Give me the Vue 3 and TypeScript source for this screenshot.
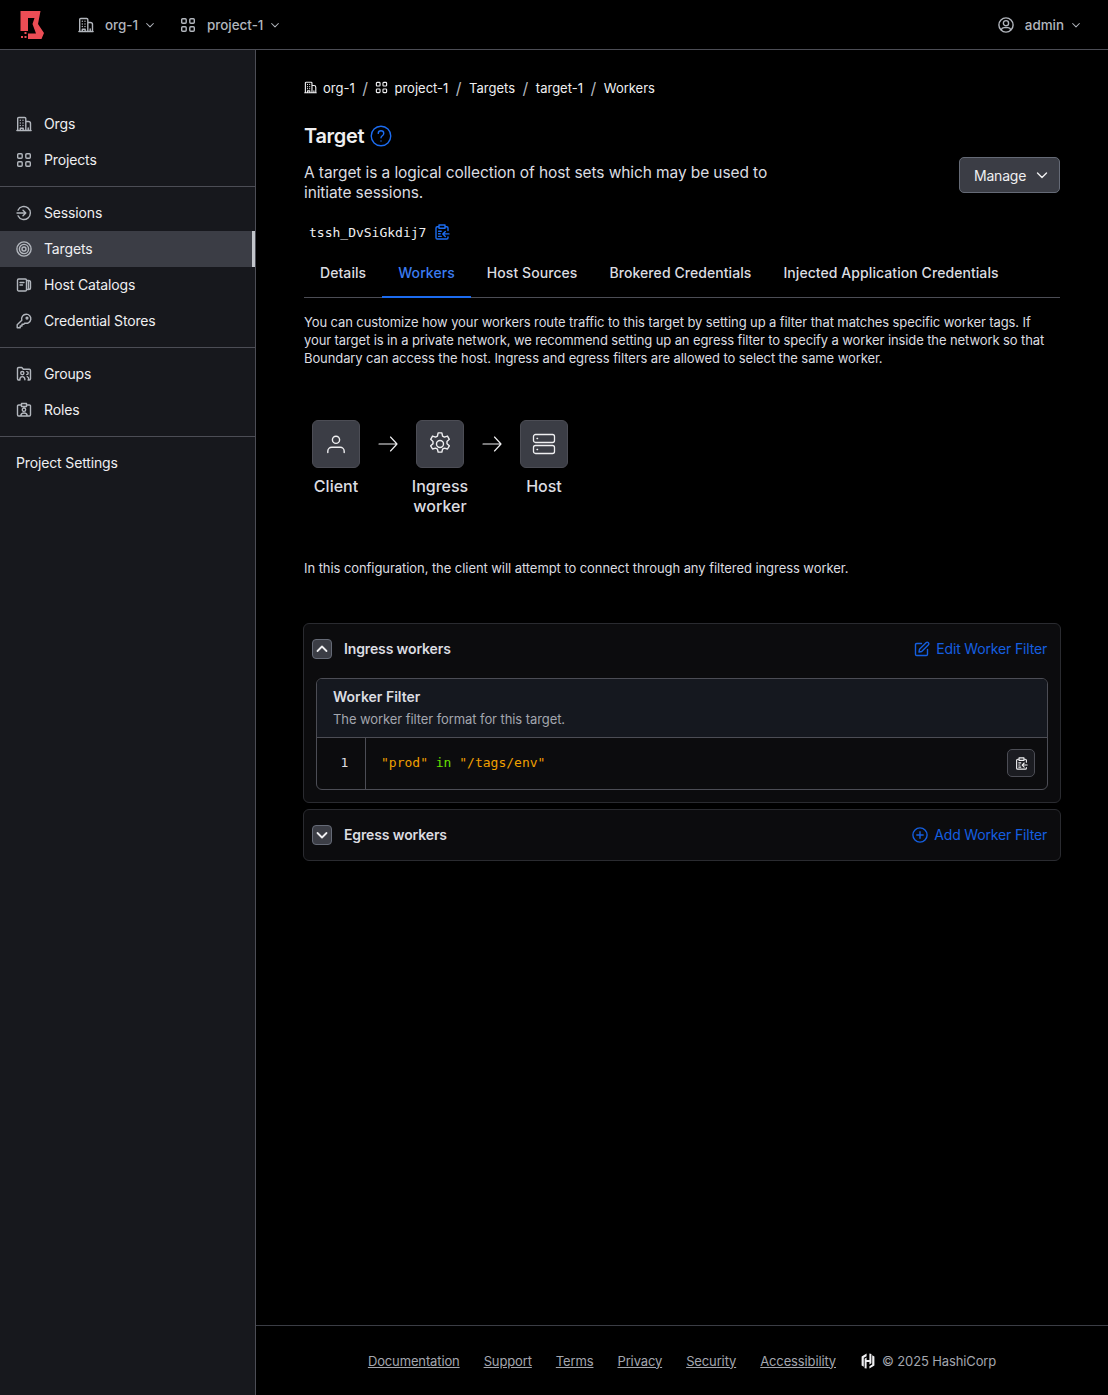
<script setup lang="ts">
const icons: Record<string, string> = {
  org: 'M1.7 14.5V2.6c0-.7.4-1.1 1.1-1.1h5.9c.7 0 1.1.4 1.1 1.1v11.9M.9 14.5h14.2M9.8 5.5h2.6c1.3 0 2.1.8 2.1 2.1v6.9M4.3 4.2v.1M7 4.2v.1M4.3 6.9v.1M7 6.9v.1M4.3 9.4v.1M7 9.4v.1M4.3 14.5v-2.3h2.9v2.3M12.2 14.5v-2.5',
  grid: 'M2.7 1.7h2.5c.6 0 1 .4 1 1v2.5c0 .6-.4 1-1 1H2.7c-.6 0-1-.4-1-1V2.7c0-.6.4-1 1-1zM10.8 1.7h2.5c.6 0 1 .4 1 1v2.5c0 .6-.4 1-1 1h-2.5c-.6 0-1-.4-1-1V2.7c0-.6.4-1 1-1zM2.7 9.8h2.5c.6 0 1 .4 1 1v2.5c0 .6-.4 1-1 1H2.7c-.6 0-1-.4-1-1v-2.5c0-.6.4-1 1-1zM10.8 9.8h2.5c.6 0 1 .4 1 1v2.5c0 .6-.4 1-1 1h-2.5c-.6 0-1-.4-1-1v-2.5c0-.6.4-1 1-1z',
  sessions: 'M2 5.2A6.5 6.5 0 1 1 2 10.8M1 8h8.5M7 5.2 9.8 8 7 10.8',
  targets: 'M8 .9a7.1 7.1 0 1 0 0 14.2A7.1 7.1 0 0 0 8 .9zM8 3.4a4.6 4.6 0 1 0 0 9.2 4.6 4.6 0 0 0 0-9.2zM8 6a2 2 0 1 0 0 4 2 2 0 0 0 0-4z',
  catalogs: 'M1.5 3.2c0-.6.5-1.2 1.2-1.2h6.6c.7 0 1.2.6 1.2 1.2v9.6c0 .6-.5 1.2-1.2 1.2H2.7c-.7 0-1.2-.6-1.2-1.2zM10.5 3.5h2.2c1 0 1.8.8 1.8 1.8v5.4c0 1-.8 1.8-1.8 1.8h-2.2M12.5 3.8v8.4M4 5.5h4M4 8h2.5',
  key: 'M10.2 1.2a4.6 4.6 0 0 0-4.4 6L1.2 11.8v3h3v-1.8H6v-1.8h1.8l1.1-1.1a4.6 4.6 0 1 0 1.3-9zM11 4.2a.9.9 0 1 0 0 1.8.9.9 0 0 0 0-1.8z',
  groups: 'M4 14H2.7c-.7 0-1.2-.5-1.2-1.2V2.7c0-.7.5-1.2 1.2-1.2h3.1l1.5 1.7h6c.7 0 1.2.5 1.2 1.2v8.4c0 .7-.5 1.2-1.2 1.2H12M6.3 5.5a1.6 1.6 0 1 0 0 3.2 1.6 1.6 0 0 0 0-3.2zM3.8 13.8c0-2 1.1-3.2 2.5-3.2s2.6 1.2 2.6 3.2M10.7 5.6a1.5 1.5 0 0 1 0 3M11.2 10.6c1 .3 1.6 1.4 1.6 3',
  roles: 'M5.5 3H2.7c-.7 0-1.2.5-1.2 1.2v8.6c0 .7.5 1.2 1.2 1.2h10.6c.7 0 1.2-.5 1.2-1.2V4.2c0-.7-.5-1.2-1.2-1.2h-2.8M5.5 1.5h5v3h-5zM8 6a1.7 1.7 0 1 0 0 3.4A1.7 1.7 0 0 0 8 6zM4.8 14c0-2 1.3-3 3.2-3s3.2 1 3.2 3',
  chevD: 'M3.5 6 8 10.5 12.5 6',
  chevU: 'M3.5 10 8 5.5 12.5 10',
  user: 'M8 .9a7.1 7.1 0 1 0 0 14.2A7.1 7.1 0 0 0 8 .9zM8 3.6a2.6 2.6 0 1 0 0 5.2 2.6 2.6 0 0 0 0-5.2zM3.2 13c.4-1.6 1.4-2.4 3-2.4h3.6c1.6 0 2.6.8 3 2.4',
  help: 'M8 .9a7.1 7.1 0 1 0 0 14.2A7.1 7.1 0 0 0 8 .9zM6 6.1c0-1.1.9-1.9 2-1.9s2 .8 2 1.9c0 1.7-2 1.7-2 3.2M8 11.6v.1',
  clip: 'M11.5 2.8h1.2c.7 0 1.3.6 1.3 1.3v2.4M4.5 2.8H3.3C2.6 2.8 2 3.4 2 4.1v9.6c0 .7.6 1.3 1.3 1.3h9.4c.7 0 1.3-.6 1.3-1.3v-.7M5 1h6v3.2H5zM4.6 7.2h2.6M4.6 9.8h1.6M4.6 12.4h2.6M15 9.9H8.8M11.3 7.4 8.8 9.9l2.5 2.5',
  edit: 'M7.5 2.5H2.7c-.7 0-1.2.5-1.2 1.2v9.6c0 .7.5 1.2 1.2 1.2h9.6c.7 0 1.2-.5 1.2-1.2V8.5M5.5 8.3 12.3 1.5c.5-.5 1.3-.5 1.8 0l.4.4c.5.5.5 1.3 0 1.8L7.7 10.5l-2.7.5z',
  plus: 'M8 .9a7.1 7.1 0 1 0 0 14.2A7.1 7.1 0 0 0 8 .9zM8 4.8v6.4M4.8 8h6.4',
}

const navGroups = [
  [{ icon: 'org', label: 'Orgs' }, { icon: 'grid', label: 'Projects' }],
  [
    { icon: 'sessions', label: 'Sessions' },
    { icon: 'targets', label: 'Targets', active: true },
    { icon: 'catalogs', label: 'Host Catalogs' },
    { icon: 'key', label: 'Credential Stores' },
  ],
  [{ icon: 'groups', label: 'Groups' }, { icon: 'roles', label: 'Roles' }],
]
const tabs = ['Details', 'Workers', 'Host Sources', 'Brokered Credentials', 'Injected Application Credentials']
const footerLinks = ['Documentation', 'Support', 'Terms', 'Privacy', 'Security', 'Accessibility']
</script>

<template>
  <div class="app">
    <header class="topbar">
      <div class="topbar-left">
        <svg class="logo" width="24" height="28" viewBox="0 0 24 28">
          <path fill="#ec4d55" d="M.5 0H20.5L18 13l6 9-2.5 6H8v-5.5h8L12.5 13l2-6H8v13H.5z" />
          <path fill="#ec4d55" d="M4.5 21h2v2h-2zM1 25h2v2H1zM4.5 25h2v2h-2z" />
        </svg>
        <div class="top-item">
          <svg class="ic16" viewBox="0 0 16 16"><path :d="icons.org" /></svg>
          <span>org-1</span>
          <svg class="ic12" viewBox="0 0 16 16"><path :d="icons.chevD" /></svg>
        </div>
        <div class="top-item">
          <svg class="ic16" viewBox="0 0 16 16"><path :d="icons.grid" /></svg>
          <span>project-1</span>
          <svg class="ic12" viewBox="0 0 16 16"><path :d="icons.chevD" /></svg>
        </div>
      </div>
      <div class="top-item user">
        <svg class="ic16" viewBox="0 0 16 16"><path :d="icons.user" /></svg>
        <span>admin</span>
        <svg class="ic12" viewBox="0 0 16 16"><path :d="icons.chevD" /></svg>
      </div>
    </header>

    <div class="body">
      <aside class="sidebar">
        <nav v-for="(group, gi) in navGroups" :key="gi" class="nav-group">
          <a v-for="item in group" :key="item.label" class="nav-item" :class="{ active: item.active }">
            <svg class="ic16" viewBox="0 0 16 16"><path :d="icons[item.icon]" /></svg>
            <span>{{ item.label }}</span>
          </a>
        </nav>
        <nav class="nav-group last">
          <a class="nav-item"><span>Project Settings</span></a>
        </nav>
      </aside>

      <div class="content">
        <main class="main">
          <ol class="crumbs">
            <li>
              <svg class="ic13" viewBox="0 0 16 16"><path :d="icons.org" /></svg>org-1
            </li>
            <li class="sep">/</li>
            <li>
              <svg class="ic13" viewBox="0 0 16 16"><path :d="icons.grid" /></svg>project-1
            </li>
            <li class="sep">/</li>
            <li>Targets</li>
            <li class="sep">/</li>
            <li>target-1</li>
            <li class="sep">/</li>
            <li>Workers</li>
          </ol>

          <div class="title-row">
            <h1>Target</h1>
            <svg class="help" viewBox="0 0 16 16"><path :d="icons.help" /></svg>
          </div>

          <div class="desc-row">
            <p class="desc">A target is a logical collection of host sets which may be used to initiate sessions.</p>
            <button class="manage">
              Manage
              <svg class="ic16" viewBox="0 0 16 16"><path :d="icons.chevD" /></svg>
            </button>
          </div>

          <div class="id-row">
            <code>tssh_DvSiGkdij7</code>
            <svg class="clip" viewBox="0 0 16 16"><path :d="icons.clip" /></svg>
          </div>

          <div class="tabs">
            <div v-for="t in tabs" :key="t" class="tab" :class="{ on: t === 'Workers' }">{{ t }}</div>
          </div>

          <p class="intro">
            You can customize how your workers route traffic to this target by setting up a filter that matches specific worker tags. If your target is in a private network, we recommend setting up an egress filter to specify a worker inside the network so that Boundary can access the host. Ingress and egress filters are allowed to select the same worker.
          </p>

          <div class="diagram">
            <div class="node">
              <div class="node-box">
                <svg class="big" viewBox="0 0 24 24"><path d="M12 4.2a3.6 3.6 0 1 0 0 7.2 3.6 3.6 0 0 0 0-7.2zM3.8 20.5v-1.2c0-2.3 1.8-4 4-4h8.4c2.2 0 4 1.7 4 4v1.2" /></svg>
              </div>
              <div class="node-label">Client</div>
            </div>
            <svg class="arrow" viewBox="0 0 24 24"><path d="M3 12h18M14.5 5l6.5 7-6.5 7" /></svg>
            <div class="node">
              <div class="node-box">
                <svg class="big gear" viewBox="0 0 24 24"><path d="M12 9a3 3 0 1 0 0 6 3 3 0 0 0 0-6z" /><path d="M10.4 2.5h3.2l.6 2.7 1.6.9 2.6-.9 1.6 2.8-2 1.8v1.9l2 1.9-1.6 2.7-2.6-.8-1.6.9-.6 2.6h-3.2l-.6-2.6-1.6-.9-2.6.8-1.6-2.7 2-1.9v-1.9l-2-1.8 1.6-2.8 2.6.9 1.6-.9z" /></svg>
              </div>
              <div class="node-label">Ingress worker</div>
            </div>
            <svg class="arrow" viewBox="0 0 24 24"><path d="M3 12h18M14.5 5l6.5 7-6.5 7" /></svg>
            <div class="node">
              <div class="node-box">
                <svg class="big host" viewBox="0 0 24 24"><rect x="1.5" y="2.5" width="21" height="8" rx="2" /><rect x="1.5" y="13.5" width="21" height="8" rx="2" /><path d="M5 6.5h.6M5 17.5h.6" /></svg>
              </div>
              <div class="node-label">Host</div>
            </div>
          </div>

          <p class="config">In this configuration, the client will attempt to connect through any filtered ingress worker.</p>

          <section class="panel">
            <div class="panel-head">
              <button class="toggle"><svg viewBox="0 0 16 16"><path :d="icons.chevU" /></svg></button>
              <h3>Ingress workers</h3>
              <a class="link edit"><svg class="ic16" viewBox="0 0 16 16"><path :d="icons.edit" /></svg>Edit Worker Filter</a>
            </div>
            <div class="code-block">
              <div class="code-head">
                <div class="code-title">Worker Filter</div>
                <div class="code-sub">The worker filter format for this target.</div>
              </div>
              <div class="code-body">
                <div class="gutter">1</div>
                <pre class="code"><span class="str">"prod"</span> <span class="kw">in</span> <span class="str">"/tags/env"</span></pre>
                <button class="copy"><svg viewBox="0 0 16 16"><path :d="icons.clip" /></svg></button>
              </div>
            </div>
          </section>

          <section class="panel second">
            <div class="panel-head">
              <button class="toggle"><svg viewBox="0 0 16 16"><path :d="icons.chevD" /></svg></button>
              <h3>Egress workers</h3>
              <a class="link add"><svg class="ic16" viewBox="0 0 16 16"><path :d="icons.plus" /></svg>Add Worker Filter</a>
            </div>
          </section>
        </main>

        <footer class="footer">
          <a v-for="l in footerLinks" :key="l">{{ l }}</a>
          <span class="copyright">
            <svg class="hashi" viewBox="0 0 16 16"><path d="M6.6.6 1.6 3.5v9l2.2 1.3V4.8l2.8-1.6zM9.4.6v6.5H6.6V4.6L4.6 5.8v9.4l2 .2V9h2.8v2.5l2-1.2V.9zM12.2 2.2v9.4l-2.8 1.6v2.2l5-2.9v-9z" /></svg>
            © 2025 HashiCorp
          </span>
        </footer>
      </div>
    </div>
  </div>
</template>

<style>
html, body { background: #000; }
</style>

<style scoped>
.app {
  width: 1108px;
  height: 1395px;
  display: flex;
  flex-direction: column;
  background: #000;
  font-family: Inter, "Liberation Sans", sans-serif;
  color: #efeff1;
  font-size: 14px;
  overflow: hidden;
}
svg { fill: none; stroke: currentColor; stroke-width: 1.4; stroke-linecap: round; stroke-linejoin: round; flex: none; }
.ic16 { width: 16px; height: 16px; }
.ic13 { width: 13px; height: 13px; }
.ic12 { width: 12px; height: 12px; }

.topbar {
  height: 50px;
  flex: none;
  box-sizing: border-box;
  border-bottom: 1px solid #4c4d55;
  display: flex;
  align-items: center;
  justify-content: space-between;
  padding: 0 26px 0 20px;
}
.topbar-left { display: flex; align-items: center; }
.logo { stroke: none; margin-right: 34px; }
.top-item {
  display: flex;
  align-items: center;
  color: #b2b6bd;
  font-size: 13.4px;
  font-weight: 500;
  margin-right: 24px;
}
.top-item .ic16 { margin-right: 11px; }
.top-item .ic12 { margin-left: 6px; }
.top-item.user { margin-right: 0; }

.body { flex: 1; display: flex; min-height: 0; }
.sidebar {
  width: 256px;
  flex: none;
  box-sizing: border-box;
  background: #17181d;
  border-right: 1px solid #4c4d55;
  padding-top: 48px;
}
.nav-group { padding: 8px 0; border-bottom: 1px solid #4c4d55; display: block; }
.nav-group.last { border-bottom: 0; }
.nav-item {
  height: 36px;
  display: flex;
  align-items: center;
  gap: 12px;
  padding-left: 16px;
  color: #efeff1;
  font-size: 14px;
  letter-spacing: -0.14px;
}
.nav-item span { padding-bottom: 2px; }
.nav-item svg { color: #b2b6bd; }
.nav-item.active { background: #3b3d45; box-shadow: inset -3px 0 0 #c2c5cb; }

.content { flex: 1; min-width: 0; display: flex; flex-direction: column; }
.main { flex: 1; padding: 29px 48px 0; }

.crumbs {
  list-style: none;
  margin: 0;
  padding: 0;
  display: flex;
  align-items: center;
  height: 17px;
  font-size: 13px;
  color: #efeff1;
}
.crumbs li { display: flex; align-items: center; gap: 6px; }
.crumbs .sep { color: #b2b6bd; font-size: 16px; margin: 0 7.5px; }

.title-row { display: flex; align-items: center; gap: 6px; margin-top: 26px; height: 28px; }
h1 { margin: 0; font-size: 20px; font-weight: 600; line-height: 28px; color: #efeff1; letter-spacing: -0.3px; }
.help { width: 22px; height: 22px; color: #1c6cf0; stroke-width: 1; }

.desc-row { display: flex; justify-content: space-between; align-items: flex-start; margin-top: 7px; }
.desc { margin: 6px 0 0; width: 480px; font-size: 15.5px; letter-spacing: -0.1px; line-height: 20px; color: #dcdde1; }
.manage {
  width: 101px;
  height: 36px;
  box-sizing: border-box;
  padding: 0 0 0 14px;
  border: 1px solid #656a76;
  border-radius: 5px;
  background: #3b3d45;
  color: #efeff1;
  font: 400 14px Inter, sans-serif;
  letter-spacing: -0.2px;
  display: flex;
  align-items: center;
  gap: 8px;
}

.id-row { display: flex; align-items: center; gap: 8px; margin-top: 18px; padding-left: 5px; height: 22px; }
code { font-family: "DejaVu Sans Mono", monospace; font-size: 13px; color: #efeff1; }
.clip { width: 16px; height: 16px; color: #1c6cf0; }

.tabs { display: flex; margin-top: 10px; border-bottom: 1px solid #4c4d55; height: 44px; }
.tab {
  padding: 0 16px;
  font-size: 14px;
  font-weight: 500;
  letter-spacing: 0.07px;
  line-height: 40px;
  color: #dcdde1;
  height: 44px;
  box-sizing: border-box;
}
.tab.on { color: #3b7cf0; border-bottom: 2px solid #1c6cf0; height: 45px; }

.intro { margin: 15px 0 0; font-size: 13px; letter-spacing: -0.1px; line-height: 18px; color: #dcdde1; }

.diagram { display: flex; align-items: flex-start; margin-top: 53px; padding-left: 8px; height: 96px; }
.node { width: 48px; position: relative; }
.node-box {
  width: 48px;
  height: 48px;
  box-sizing: border-box;
  background: #3b3d45;
  border: 1px solid #4c4d55;
  border-radius: 6px;
  display: flex;
  align-items: center;
  justify-content: center;
  color: #efeff1;
}
.big { width: 24px; height: 24px; stroke-width: 1.4; }
.big.gear { width: 28px; height: 28px; stroke-width: 1.2; }
.big.host { stroke-width: 1.3; }
.node-label {
  position: absolute;
  top: 56px;
  left: -16px;
  width: 80px;
  text-align: center;
  font-size: 16px;
  font-weight: 500;
  line-height: 20px;
  color: #dcdde1;
}
.arrow { width: 24px; height: 24px; margin: 12px 16px 0; color: #efeff1; stroke-width: 1.15; }

.config { margin: 43px 0 0; font-size: 13px; letter-spacing: -0.065px; line-height: 18px; color: #dcdde1; }

.panel {
  margin-top: 46px;
  margin-left: -1px;
  margin-right: -1px;
  background: #0c0c0e;
  border: 1px solid #2a2b30;
  border-radius: 6px;
  padding: 0 12px 12px;
}
.panel.second { margin-top: 6px; padding-bottom: 0; }
.panel-head { height: 50px; display: flex; align-items: center; gap: 12px; }
.panel-head h3 { margin: 0 0 2px; font-size: 14px; font-weight: 600; letter-spacing: -0.13px; color: #dcdde1; flex: 1; }
.toggle {
  width: 20px;
  height: 20px;
  padding: 0;
  margin-left: -4px;
  box-sizing: border-box;
  border: 1px solid #656a76;
  border-radius: 4px;
  background: #3b3d45;
  color: #efeff1;
  display: flex;
  align-items: center;
  justify-content: center;
}
.toggle svg { width: 16px; height: 16px; stroke-width: 1.8; }
.link { display: flex; align-items: center; gap: 6px; color: #155fe0; font-size: 14px; letter-spacing: -0.17px; margin: 0 1px 2px 0; }
.link svg { margin-top: 2px; }

.code-block {
  margin-top: 4px;
  border: 1px solid #4c4d55;
  border-radius: 6px;
  overflow: hidden;
}
.code-head { background: #15181f; height: 59px; box-sizing: border-box; padding: 8px 16px 0; border-bottom: 1px solid #4c4d55; }
.code-title { font-size: 14px; font-weight: 600; line-height: 20px; color: #dcdde1; }
.code-sub { font-size: 13px; letter-spacing: -0.08px; line-height: 18px; color: #a3a6ae; margin-top: 3px; }
.code-body { height: 51px; display: flex; align-items: center; position: relative; }
.gutter {
  width: 49px;
  height: 100%;
  box-sizing: border-box;
  border-right: 1px solid #4c4d55;
  padding-left: 7px;
  text-align: center;
  line-height: 49px;
  font-family: "DejaVu Sans Mono", monospace;
  font-size: 13px;
  color: #dcdde1;
}
.code { margin: 0 0 3px 15px; font-family: "DejaVu Sans Mono", monospace; font-size: 13px; }
.str { color: #f0a000; }
.kw { color: #66e000; }
.copy {
  position: absolute;
  right: 12px;
  top: 11px;
  width: 28px;
  height: 28px;
  padding: 0;
  border: 1px solid #4c4d55;
  border-radius: 5px;
  background: #1b1c21;
  color: #efeff1;
  display: flex;
  align-items: center;
  justify-content: center;
}
.copy svg { width: 13px; height: 13px; }

.footer {
  height: 70px;
  flex: none;
  box-sizing: border-box;
  border-top: 1px solid #3b3d45;
  display: flex;
  align-items: center;
  justify-content: center;
  gap: 24px;
  font-size: 13px;
  letter-spacing: -0.13px;
  color: #a3a6ae;
}
.footer a { text-decoration: underline; }
.copyright { display: flex; align-items: center; gap: 6px; }
.hashi { width: 16px; height: 16px; stroke: none; fill: #efeff1; }
</style>
